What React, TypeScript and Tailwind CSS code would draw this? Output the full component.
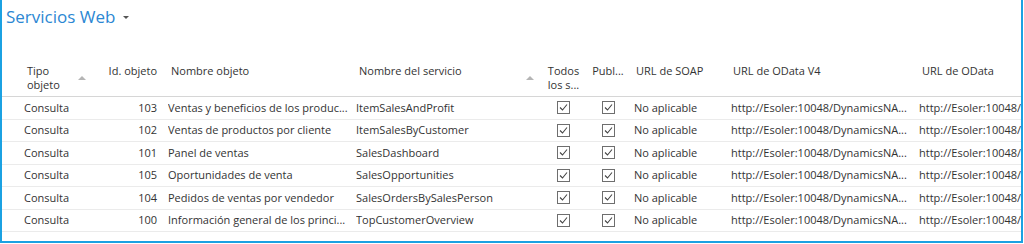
import React from "react";

const rows = [
  ["103", "Ventas y beneficios de los produc...", "ItemSalesAndProfit"],
  ["102", "Ventas de productos por cliente", "ItemSalesByCustomer"],
  ["101", "Panel de ventas", "SalesDashboard"],
  ["105", "Oportunidades de venta", "SalesOpportunities"],
  ["104", "Pedidos de ventas por vendedor", "SalesOrdersBySalesPerson"],
  ["100", "Información general de los princi...", "TopCustomerOverview"],
];

const Check = () => (
  <svg width="13" height="13" viewBox="0 0 13 13">
    <rect x="0.5" y="0.5" width="12" height="12" fill="white" stroke="#6e6e6e" />
    <path d="M3 6.5 L5.5 9 L10 3.5" fill="none" stroke="#444" strokeWidth="1.1" />
  </svg>
);

const SortUp = () => (
  <span className="mt-[12px] w-0 h-0 border-l-[4px] border-r-[4px] border-b-[4px] border-l-transparent border-r-transparent border-b-[#b5b5b5]" />
);

const App = () => {
  return (
    <div className="w-[1024px] h-[244px] bg-white overflow-hidden font-['Open_Sans',sans-serif] text-[#333]">
      <div className="w-[1023px] h-[243px] border-l-2 border-r-2 border-b-2 border-[#1ba1e2] flex flex-col">
        <div className="flex items-center pl-[4px] pt-[5px] h-[29px]">
          <span className="text-[17px] leading-[24px] text-[#2b87d3]">Servicios Web</span>
          <span className="ml-[8px] mt-[1px] w-0 h-0 border-l-[3px] border-r-[3px] border-t-[3px] border-l-transparent border-r-transparent border-t-[#555]" />
        </div>

        <div className="mt-[35px] flex h-[33px] border-b border-[#d6d6d6] text-[11px] leading-[14px]">
          <div className="w-[22px] shrink-0" />
          <div className="w-[72px] shrink-0 flex justify-between pl-[3px] pr-[10px]">
            <span>
              Tipo
              <br />
              objeto
            </span>
            <SortUp />
          </div>
          <div className="w-[72px] shrink-0 text-right pr-[11px]">Id. objeto</div>
          <div className="w-[188px] shrink-0 pl-[3px]">Nombre objeto</div>
          <div className="w-[189px] shrink-0 flex justify-between pl-[3px] pr-[11px]">
            <span>Nombre del servicio</span>
            <SortUp />
          </div>
          <div className="w-[37px] shrink-0 text-center">
            Todos
            <br />
            los s...
          </div>
          <div className="w-[52px] shrink-0 text-center">Publ...</div>
          <div className="w-[97px] shrink-0 pl-[2px]">URL de SOAP</div>
          <div className="w-[188px] shrink-0 pl-[2px]">URL de OData V4</div>
          <div className="flex-1 pl-[3px] whitespace-nowrap overflow-hidden">URL de OData</div>
        </div>

        {rows.map((r) => (
          <div
            key={r[0]}
            className="flex items-center h-[22.5px] border-b border-[#ebebeb] text-[11px] leading-[14px] whitespace-nowrap"
          >
            <div className="w-[22px] shrink-0" />
            <div className="w-[72px] shrink-0">Consulta</div>
            <div className="w-[72px] shrink-0 text-right pr-[11px]">{r[0]}</div>
            <div className="w-[188px] shrink-0 overflow-hidden">{r[1]}</div>
            <div className="w-[189px] shrink-0 overflow-hidden">{r[2]}</div>
            <div className="w-[37px] shrink-0 flex justify-center">
              <Check />
            </div>
            <div className="w-[52px] shrink-0 flex justify-center">
              <Check />
            </div>
            <div className="w-[97px] shrink-0">No aplicable</div>
            <div className="w-[188px] shrink-0 overflow-hidden">http://Esoler:10048/DynamicsNA...</div>
            <div className="flex-1 overflow-hidden">http://Esoler:10048/DynamicsNAV100/ODataV4</div>
          </div>
        ))}
      </div>
    </div>
  );
};

export default App;
